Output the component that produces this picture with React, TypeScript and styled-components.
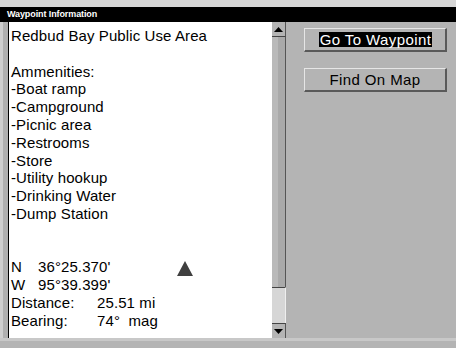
import React from "react";
import styled, { createGlobalStyle } from "styled-components";

const Global = createGlobalStyle`
  html, body { margin: 0; padding: 0; }
  body { background: #b4b4b4; font-family: "Liberation Sans", Arial, sans-serif; }
`;

const Screen = styled.div`
  width: 456px;
  height: 348px;
  background: #b4b4b4;
  display: flex;
  flex-direction: column;
  overflow: hidden;
`;

const TopStrip = styled.div`
  height: 7px;
  background: #d6d6d6;
`;

const TitleBar = styled.div`
  height: 15px;
  background: #000;
  color: #fff;
  font-size: 9px;
  font-weight: bold;
  line-height: 15px;
  padding-left: 7px;
  letter-spacing: -0.1px;
`;

const Main = styled.div`
  height: 316px;
  display: flex;
`;

const LeftEdge = styled.div`
  width: 8px;
  background: linear-gradient(to right, #cfcfcf 0 3px, #b0b0b0 3px 8px);
`;

const Panel = styled.div`
  width: 264px;
  background: #fff;
  border-left: 1px solid #000;
  padding: 5px 0 0 2px;
  box-sizing: border-box;
  font-size: 15px;
  line-height: 17.8px;
  letter-spacing: 0.1px;
  color: #000;
`;

const Line = styled.div`
  height: 17.8px;
  white-space: pre;
`;

const CoordRow = styled.div<{ $label: number }>`
  display: grid;
  grid-template-columns: ${(p) => p.$label}px auto 1fr;
  height: 17.8px;
  white-space: pre;
`;

const Value = styled.span<{ $w?: number }>`
  width: ${(p) => (p.$w ? `${p.$w}px` : "auto")};
`;

const Triangle = styled.div`
  width: 0;
  height: 0;
  margin-top: 3px;
  border-left: 8px solid transparent;
  border-right: 8px solid transparent;
  border-bottom: 15px solid #404040;
`;

const Scrollbar = styled.div`
  width: 14px;
  display: flex;
  flex-direction: column;
  background: linear-gradient(to right, #b9b9b9 0 6px, #a9a9a9 6px 13px, #555 13px 14px);
`;

const ArrowButton = styled.div<{ $top?: boolean }>`
  height: 14px;
  background: #b4b4b4;
  display: flex;
  align-items: center;
  justify-content: center;
  border-right: 1px solid #555;
  ${(p) => (p.$top ? "border-bottom: 1px solid #444;" : "border-top: 1px solid #444;")}
`;

const Track = styled.div<{ $grow?: boolean }>`
  flex: ${(p) => (p.$grow ? 1 : "none")};
`;

const Thumb = styled.div`
  height: 35px;
  background: #d6d6d6;
  border-top: 1px solid #444;
  border-right: 1px solid #eee;
`;

const Side = styled.div`
  flex: 1;
  display: flex;
  flex-direction: column;
  gap: 16px;
  padding: 6px 0 0 18px;
`;

const Button = styled.div`
  width: 143px;
  height: 24px;
  box-sizing: border-box;
  border-top: 1px solid #e6e6e6;
  border-left: 1px solid #e6e6e6;
  border-bottom: 2px solid #5a5a5a;
  border-right: 2px solid #5a5a5a;
  display: flex;
  align-items: center;
  justify-content: center;
  font-size: 15px;
  letter-spacing: 0.4px;
  color: #000;
`;

const Highlight = styled.span`
  background: #000;
  color: #fff;
  padding: 0 1px;
  line-height: 15px;
  margin-left: 1px;
`;

const BottomStrip = styled.div`
  height: 10px;
  background: linear-gradient(to bottom, #c8c8c8 0 3px, #b4b4b4 3px);
`;

const Arrow = ({ up }: { up?: boolean }) => (
  <svg width="9" height="5" viewBox="0 0 9 5">
    <polygon points={up ? "4.5,0 9,5 0,5" : "0,0 9,0 4.5,5"} fill="#000" />
  </svg>
);

const amenities = [
  "-Boat ramp",
  "-Campground",
  "-Picnic area",
  "-Restrooms",
  "-Store",
  "-Utility hookup",
  "-Drinking Water",
  "-Dump Station",
];

export default function App() {
  return (
    <Screen>
      <Global />
      <TopStrip />
      <TitleBar>Waypoint Information</TitleBar>
      <Main>
        <LeftEdge />
        <Panel>
          <Line>Redbud Bay Public Use Area</Line>
          <Line> </Line>
          <Line>Ammenities:</Line>
          {amenities.map((a) => (
            <Line key={a}>{a}</Line>
          ))}
          <Line> </Line>
          <Line> </Line>
          <CoordRow $label={27}>
            <span>N</span>
            <Value $w={139}>36°25.370'</Value>
            <Triangle />
          </CoordRow>
          <CoordRow $label={27}>
            <span>W</span>
            <Value>95°39.399'</Value>
          </CoordRow>
          <CoordRow $label={86}>
            <span>Distance:</span>
            <Value>25.51 mi</Value>
          </CoordRow>
          <CoordRow $label={86}>
            <span>Bearing:</span>
            <Value>74°  mag</Value>
          </CoordRow>
        </Panel>
        <Scrollbar>
          <ArrowButton $top>
            <Arrow up />
          </ArrowButton>
          <Track $grow />
          <Thumb />
          <ArrowButton>
            <Arrow />
          </ArrowButton>
        </Scrollbar>
        <Side>
          <Button>
            <Highlight>Go To Waypoint</Highlight>
          </Button>
          <Button>Find On Map</Button>
        </Side>
      </Main>
      <BottomStrip />
    </Screen>
  );
}
